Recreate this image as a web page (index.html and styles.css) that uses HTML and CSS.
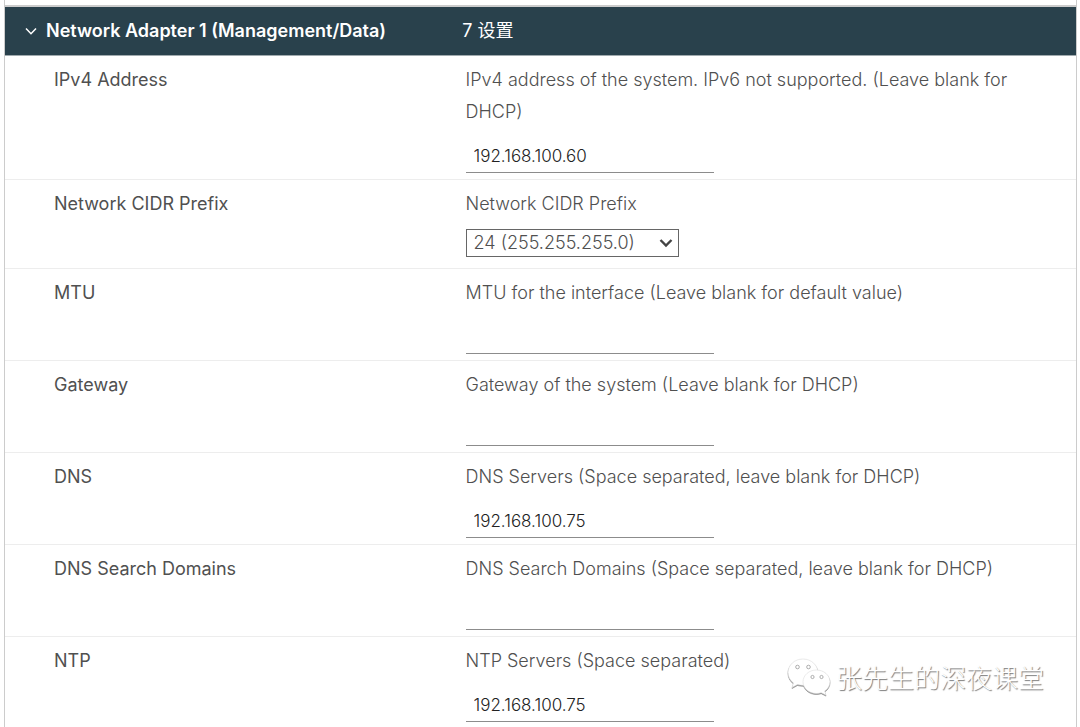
FILE: index.html
```html
<!DOCTYPE html>
<html lang="zh-CN">
<head>
<meta charset="utf-8">
<meta name="viewport" content="width=device-width, initial-scale=1">
<title>Network Adapter 1</title>
<link rel="stylesheet" href="styles.css">
</head>
<body>
<form class="panel">
  <header class="panel-header">
    <button type="button" class="toggle" aria-expanded="true">
      <svg class="chevron" viewBox="0 0 14 14" aria-hidden="true"><path d="M2 4.5 7 9.7 12 4.5"/></svg>
      <span>Network Adapter 1 (Management/Data)</span>
    </button>
    <span class="count">7 设置</span>
  </header>
  <div class="row">
    <label class="name" for="ip">IPv4 Address</label>
    <div class="value">
      <p class="hint">IPv4 address of the system. IPv6 not supported. (Leave blank for DHCP)</p>
      <input class="field" id="ip" type="text" value="192.168.100.60">
    </div>
  </div>
  <div class="row">
    <label class="name" for="cidr">Network CIDR Prefix</label>
    <div class="value">
      <p class="hint">Network CIDR Prefix</p>
      <div class="select-wrap">
        <select class="select" id="cidr"><option>24 (255.255.255.0)</option></select>
        <svg class="select-arrow" viewBox="0 0 14 10" aria-hidden="true"><path d="M1.5 2 7 7.5 12.500 2"/></svg>
      </div>
    </div>
  </div>
  <div class="row">
    <label class="name" for="mtu">MTU</label>
    <div class="value">
      <p class="hint">MTU for the interface (Leave blank for default value)</p>
      <input class="field" id="mtu" type="text">
    </div>
  </div>
  <div class="row">
    <label class="name" for="gateway">Gateway</label>
    <div class="value">
      <p class="hint">Gateway of the system (Leave blank for DHCP)</p>
      <input class="field" id="gateway" type="text">
    </div>
  </div>
  <div class="row">
    <label class="name" for="dns">DNS</label>
    <div class="value">
      <p class="hint">DNS Servers (Space separated, leave blank for DHCP)</p>
      <input class="field" id="dns" type="text" value="192.168.100.75">
    </div>
  </div>
  <div class="row">
    <label class="name" for="domains">DNS Search Domains</label>
    <div class="value">
      <p class="hint">DNS Search Domains (Space separated, leave blank for DHCP)</p>
      <input class="field" id="domains" type="text">
    </div>
  </div>
  <div class="row">
    <label class="name" for="ntp">NTP</label>
    <div class="value">
      <p class="hint">NTP Servers (Space separated)</p>
      <input class="field" id="ntp" type="text" value="192.168.100.75">
    </div>
  </div>
</form>
<div class="watermark">
  <svg class="bubbles" viewBox="0 0 44 38" aria-hidden="true">
    <path class="bubble" d="M16 1C7.500 1 1 7 1 14.500c0 4.200 2.200 8 5.500 10.500L5 29.500l5.500-3c1.700.5 3.500.8 5.500.8 8.500 0 15-5.800 15-12.800S24.500 1 16 1Z"/>
    <circle class="eye" cx="10.500" cy="9" r="1.800"/><circle class="eye" cx="21.500" cy="9" r="1.800"/>
    <path class="bubble" d="M29.500 12C22 12 16 17.300 16 23.800s6 11.700 13.500 11.700c1.700 0 3.300-.3 4.700-.8l4.800 2.400-1.300-4c3.200-2.200 5.300-5.500 5.300-9.300C43 17.300 37 12 29.500 12Z"/>
    <circle class="eye" cx="25.500" cy="19" r="1.600"/><circle class="eye" cx="34.500" cy="19" r="1.600"/>
  </svg>
  <span>张先生的深夜课堂</span>
</div>
</body>
</html>
```
FILE: styles.css
```css
* { box-sizing: border-box; }
body {
  margin: 0;
  background: #fff;
  color: #505050;
  font: 18px/32px Inter, "Noto Sans CJK SC", sans-serif;
  overflow-x: hidden;
}
.panel {
  min-height: 100vh;
  margin: 0 3px 0 4px;
  padding-top: 5px;
  border: solid #ccc;
  border-width: 0 1px;
}
.panel-header,
.row {
  display: grid;
  grid-template-columns: 43fr 57fr;
}
.panel-header {
  grid-template-columns: 427fr 573fr;
  align-items: center;
  height: 51px;
  background: #29414c;
  color: #fff;
  border-top: 2px solid #ccc;
  border-bottom: 1px solid #a0aaae;
}
.toggle {
  display: flex;
  align-items: center;
  gap: 8px;
  padding: 0 0 0 19px;
  border: 0;
  background: none;
  color: inherit;
  font: inherit;
  font-weight: 600;
  white-space: nowrap;
}
.chevron {
  width: 14px;
  height: 14px;
  fill: none;
  stroke: #fff;
  stroke-width: 1.5;
}
.row {
  padding: 8px 0 6px;
  border-bottom: 1px solid #ededed;
}
.row:last-child {
  padding-bottom: 5px;
  border-bottom: 0;
}
.name { padding-left: 49px; }
.value { padding-right: 24px; }
.hint {
  margin: 0;
  font-weight: 300;
}
.field {
  display: block;
  width: 248px;
  height: 33px;
  margin-top: 12px;
  padding: 0 8px;
  border: 0;
  border-bottom: 1px solid #8c8c8c;
  background: none;
  color: #222;
  font: inherit;
  font-size: 17px;
  font-weight: 300;
}
.select-wrap {
  position: relative;
  width: 213px;
  margin: 9px 0 5px;
}
.select {
  display: block;
  width: 100%;
  height: 28px;
  padding: 0 7px;
  border: 1px solid #666;
  border-radius: 0;
  background: #fff;
  color: #505050;
  appearance: none;
  font: inherit;
  font-weight: 300;
  line-height: 24px;
}
.select-arrow {
  position: absolute;
  top: 9px;
  right: 6px;
  width: 14px;
  height: 10px;
  fill: none;
  stroke: #444;
  stroke-width: 2.4;
  pointer-events: none;
}
.watermark {
  position: absolute;
  right: 36px;
  top: 658px;
  display: flex;
  align-items: center;
  gap: 5px;
  color: #fff;
  font: 26px/38px "Noto Sans CJK SC", sans-serif;
  font-weight: 300;
  text-shadow: 1px 1px 1px #777;
}
.bubbles {
  width: 44px;
  height: 38px;
  filter: drop-shadow(0 1px 0 #888);
}
.bubble { fill: #fff; stroke: #ddd; stroke-width: 0.6; }
.eye { fill: #fff; stroke: #999; stroke-width: 0.8; }
```
